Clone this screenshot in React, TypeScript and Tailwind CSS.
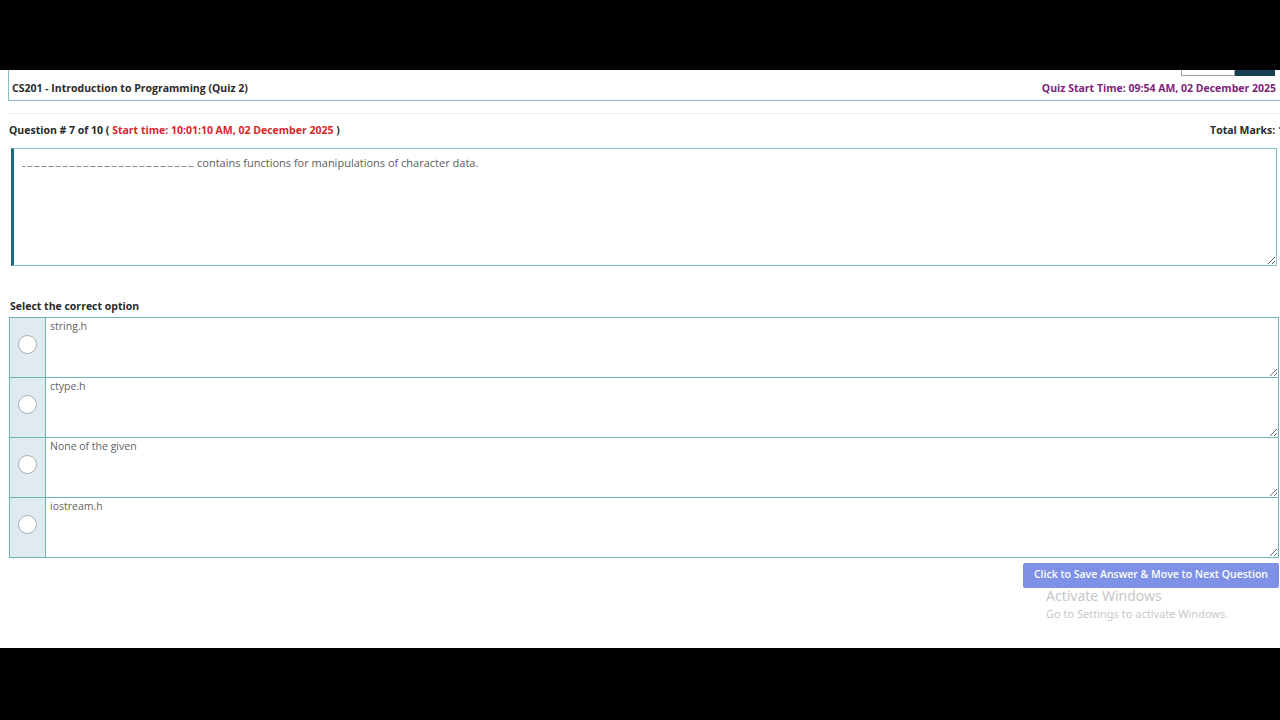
const options = ['string.h', 'ctype.h', 'None of the given', 'iostream.h'];

const font = { fontFamily: '"Open Sans", "Liberation Sans", sans-serif' };

export default function App() {
  return (
    <div className="flex h-[720px] w-[1280px] flex-col overflow-hidden bg-black" style={font}>
      <div className="h-[70px] shrink-0 bg-black" />

      <main className="relative flex h-[578px] shrink-0 flex-col overflow-hidden bg-white">
        {/* Course header */}
        <header className="ml-[8px] flex h-[31px] flex-col border-b border-l border-[#86c0c3]">
          <div className="flex h-[6px] items-end justify-end overflow-hidden pr-[5px]">
            <span className="h-[20px] w-[54px] border border-[#9aa5aa] bg-white" />
            <span className="h-[20px] w-[40px] bg-[#163f4f]" />
          </div>
          <div className="flex h-[24px] items-center justify-between pl-[3px] pr-[4px] pt-[2px]">
            <span className="text-[10.5px] font-bold text-[#2a2a2a]">
              CS201 - Introduction to Programming (Quiz 2)
            </span>
            <span className="text-[10.5px] font-bold text-[#7d2477]">
              Quiz Start Time: 09:54 AM, 02 December 2025
            </span>
          </div>
        </header>

        <div className="ml-[8px] mt-[12px] h-px bg-[#eef1f1]" />

        {/* Question line */}
        <div className="mr-[-4px] mt-[7px] flex h-[20px] items-center justify-between pl-[9px]">
          <span className="text-[10.5px] font-bold text-[#2a2a2a]">
            Question # 7 of 10 ({' '}
            <span className="text-[#d8262b]">Start time: 10:01:10 AM, 02 December 2025</span> )
          </span>
          <span className="whitespace-nowrap text-[10.5px] font-bold text-[#2a2a2a]">
            Total Marks: 1
          </span>
        </div>

        {/* Question body */}
        <div className="ml-[11px] mt-[7px] h-[118px] w-[1266px] resize-y overflow-auto border border-l-[3px] border-[#86c2c4] border-l-[#1b6b7c] pl-[8px] pt-[6px]">
          <p className="text-[11px] text-[#5c5c5c]">
            <span className="mr-[3px] inline-block h-[8px] w-[172px] bg-[linear-gradient(to_right,#8a8a8a_5px,transparent_5px)] bg-[length:7px_1px] bg-bottom bg-repeat-x" />
            contains functions for manipulations of character data.
          </p>
        </div>

        <div className="mt-[33px] pl-[10px] text-[10.5px] font-bold text-[#2a2a2a]">
          Select the correct option
        </div>

        {/* Options */}
        <div className="ml-[9px] mt-[2px] w-[1270px] border-t border-[#6fb3b6]">
          {options.map((opt) => (
            <div key={opt} className="flex h-[60px] border-b border-l border-r border-[#6fb3b6]">
              <div className="flex w-[36px] shrink-0 items-center justify-center border-r border-[#6fb3b6] bg-[#dfeaf1] pb-[6px]">
                <span className="h-[19px] w-[19px] rounded-full border border-[#a8b0b4] bg-white" />
              </div>
              <div className="flex-1 resize-y overflow-auto pl-[4px] pt-[1px] text-[10.5px] text-[#5f5f5f]">
                {opt}
              </div>
            </div>
          ))}
        </div>

        <div className="mt-[5px] flex justify-end pr-px">
          <button className="h-[25px] w-[256px] rounded-[2px] bg-[#7e91e6] text-[10.5px] font-semibold text-white">
            Click to Save Answer &amp; Move to Next Question
          </button>
        </div>

        {/* Windows watermark */}
        <div className="pointer-events-none absolute left-[1046px] top-[517px] text-[#c8c8c8]" style={{ fontFamily: '"Noto Sans", "Open Sans", sans-serif' }}>
          <div className="text-[14px] leading-[18px]">Activate Windows</div>
          <div className="text-[11px] leading-[18px]">Go to Settings to activate Windows.</div>
        </div>
      </main>

      <div className="flex-1 bg-black" />
    </div>
  );
}
